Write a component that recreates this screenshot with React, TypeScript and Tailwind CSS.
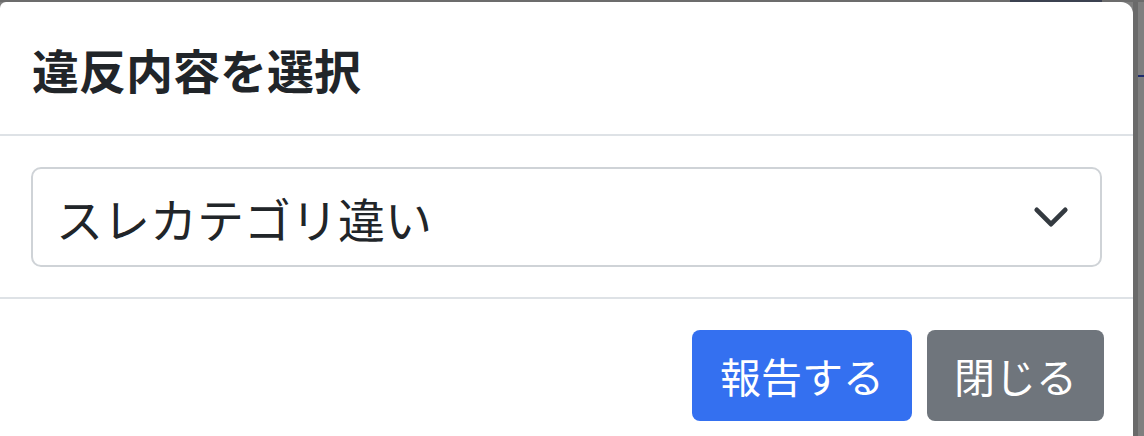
import React from 'react';

const ChevronDown: React.FC = () => (
  <svg width="38" height="38" viewBox="0 0 16 16" fill="none" aria-hidden="true">
    <path d="m2 5 6 6 6-6" stroke="#343a40" strokeWidth="2" strokeLinecap="round" strokeLinejoin="round" />
  </svg>
);

const App: React.FC = () => {
  return (
    <div
      className="w-[1144px] h-[436px] overflow-hidden flex flex-col bg-[#7f7f7f]"
      style={{ fontFamily: '"Noto Sans CJK JP", "Noto Sans", sans-serif' }}
    >
      {/* dimmed page behind the modal */}
      <div className="h-[2px] flex shrink-0 bg-[#6c6c6c]">
        <div className="w-[1010px]" />
        <div className="w-[92px] bg-[#3b4150]" />
      </div>

      <div className="flex flex-1 min-h-0">
        {/* modal */}
        <div className="w-[1133px] shrink-0 bg-white rounded-tl-[6px] rounded-tr-[12px] flex flex-col">
          <div className="h-[134px] flex items-center px-[32px] border-b-2 border-[#dee2e6]">
            <h5 className="text-[47px] font-bold text-[#212529] leading-none">違反内容を選択</h5>
          </div>

          <div className="px-[31px] pt-[31px] pb-[30px] border-b-2 border-[#dee2e6]">
            <div className="h-[100px] flex items-center justify-between pl-[23px] pr-[30px] border-2 border-[#cfd3d7] rounded-[10px] bg-white">
              <span className="text-[47px] text-[#212529] leading-none">スレカテゴリ違い</span>
              <ChevronDown />
            </div>
          </div>

          <div className="flex justify-end gap-[15px] pt-[31px] pr-[29px]">
            <button className="h-[91px] px-[28px] rounded-[8px] bg-[#3470f0] text-white text-[41px] leading-none">
              報告する
            </button>
            <button className="h-[91px] px-[27px] rounded-[8px] bg-[#6f757c] text-white text-[41px] leading-none">
              閉じる
            </button>
          </div>
        </div>

        {/* right edge of backdrop */}
        <div className="flex-1 flex">
          <div className="w-[5px] bg-[#6a6a6a]" />
          <div className="flex-1 flex flex-col">
            <div className="h-[73px]" />
            <div className="h-[2px] bg-[#1f2c6e]" />
          </div>
        </div>
      </div>
    </div>
  );
};

export default App;
